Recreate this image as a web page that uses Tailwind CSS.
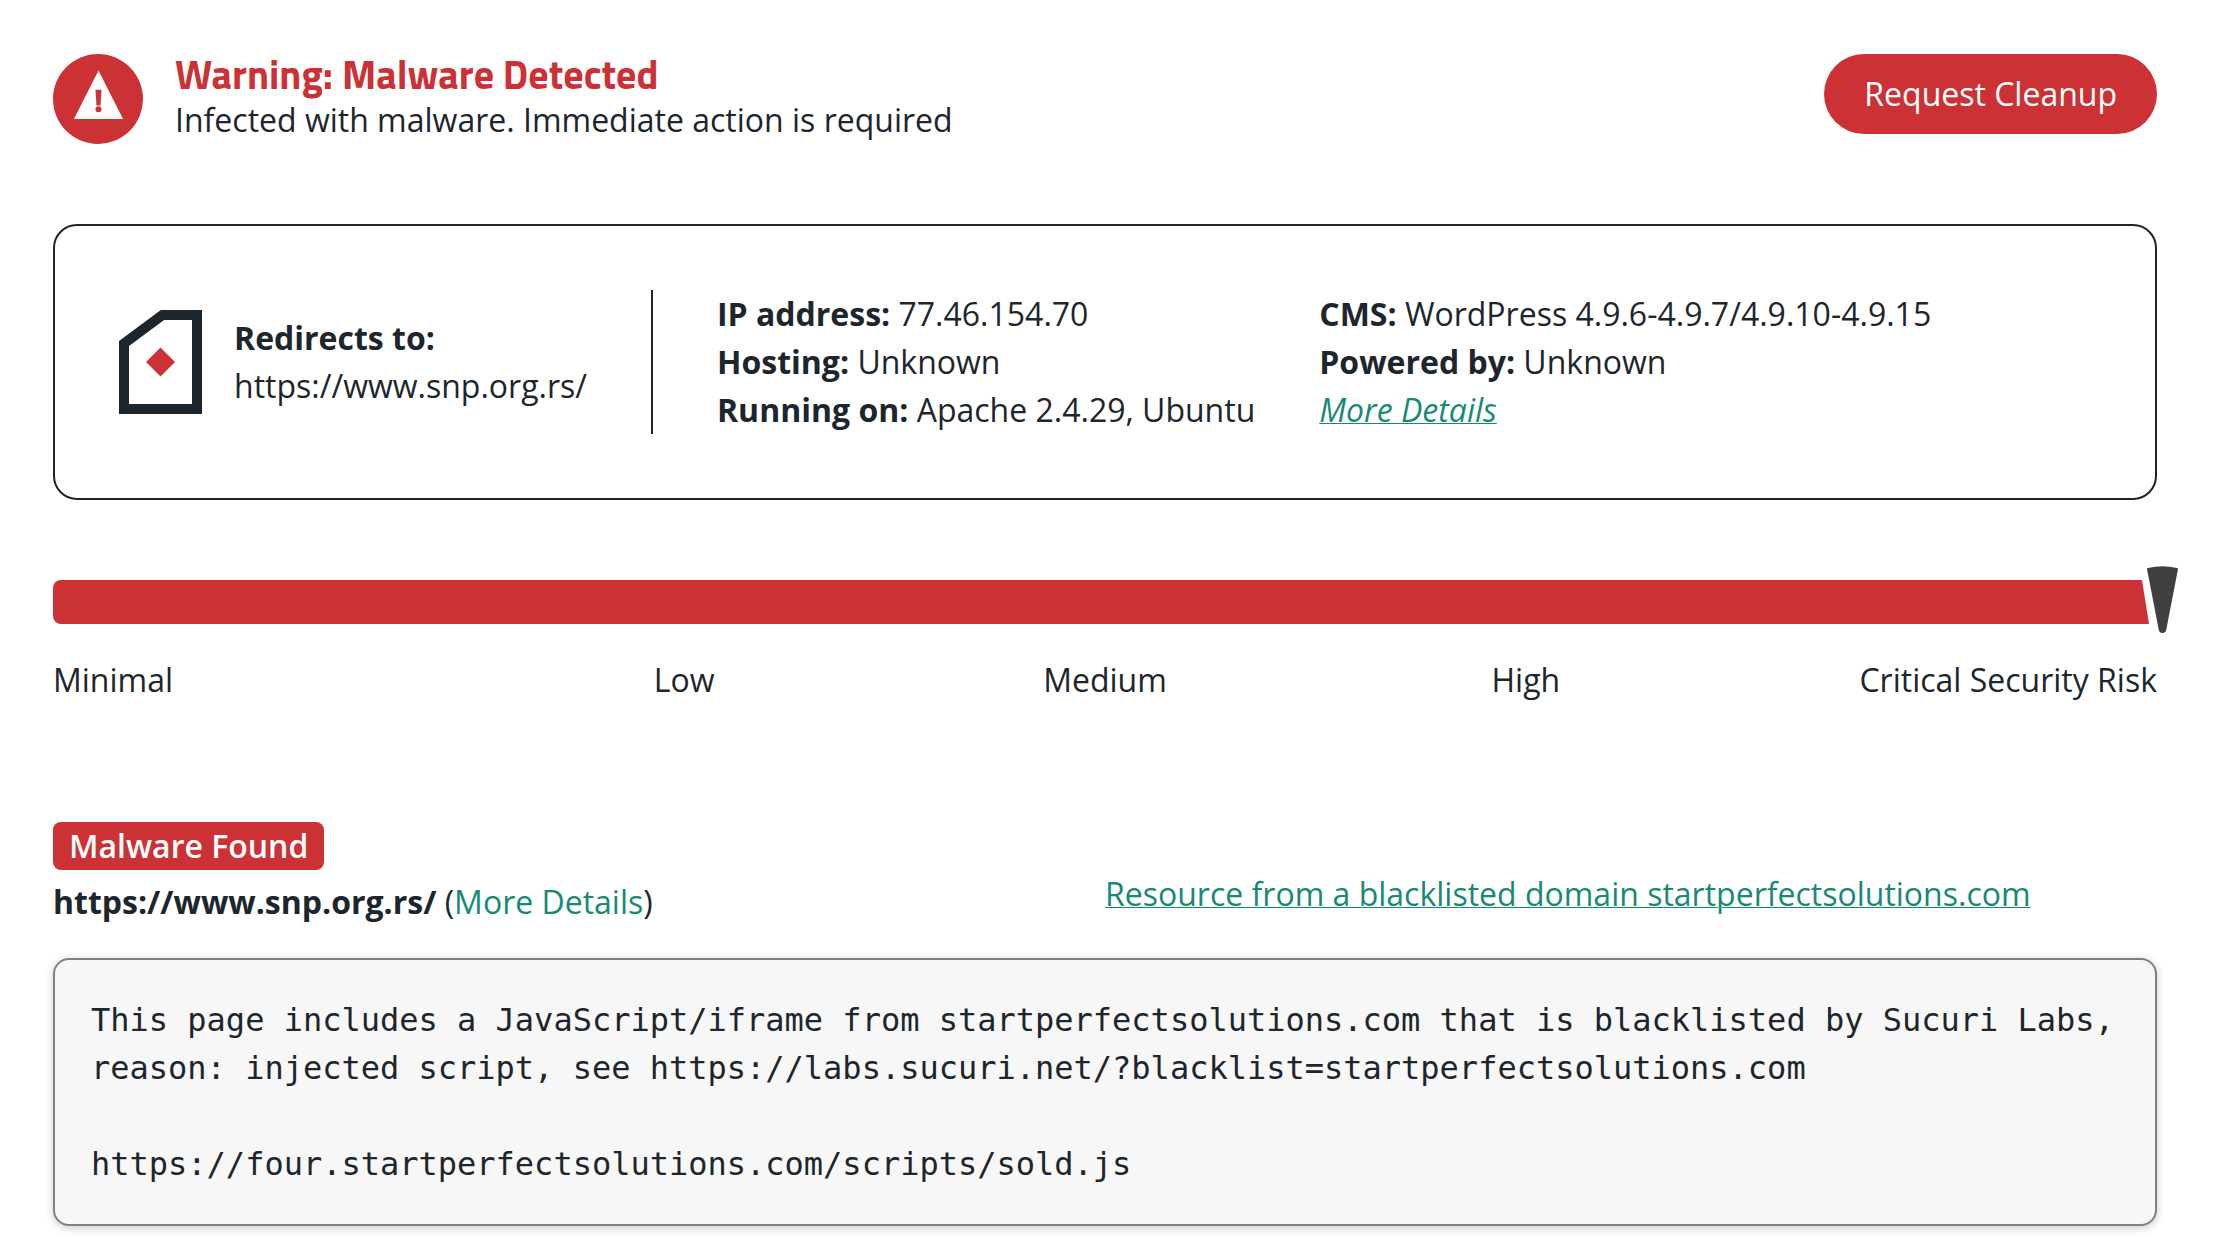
<!DOCTYPE html>
<html lang="en">
<head>
  <meta charset="UTF-8" />
  <title>Site Check Results</title>
  <meta name="viewport" content="width=device-width, initial-scale=1.0" />
  <script src="https://cdn.jsdelivr.net/npm/@tailwindcss/browser@4"></script>
</head>
<body class="bg-white text-[#1c262c] font-['Open_Sans',sans-serif] text-[32px] leading-[48px]">

  <main class="pl-[53px] pr-[61px] pt-[54px] pb-8">

    <!-- Header -->
    <header class="flex justify-between items-start">
      <div class="flex gap-8">
        <svg class="size-[90px] shrink-0" viewBox="0 0 90 90" aria-hidden="true">
          <circle cx="45" cy="45" r="45" fill="#cc3235" />
          <path d="M45.500 16.500L70 65H21z" fill="#fff" />
          <path d="M42.500 35.800h6l-1 15.800h-4z" fill="#cc3235" />
          <circle cx="45.500" cy="55.300" r="3" fill="#cc3235" />
        </svg>
        <div>
          <h1 class="text-[40px] leading-[42px] font-bold text-[#cc3235] font-['Titillium_Web','Open_Sans',sans-serif]">Warning: Malware Detected</h1>
          <p>Infected with malware. Immediate action is required</p>
        </div>
      </div>
      <button type="button" class="bg-[#cc3235] text-white rounded-full px-10 py-4 cursor-pointer">Request Cleanup</button>
    </header>

    <!-- Site info -->
    <section class="mt-20 border-2 border-[#1c262c] rounded-3xl p-16 flex">
      <div class="flex items-center gap-8 pr-16 border-r-2 border-[#1c262c]">
        <svg class="w-[83px] h-[104px] shrink-0" viewBox="0 0 83 104" aria-hidden="true">
          <path d="M5 33.500L43.500 5H78V99H5z" fill="none" stroke="#1c262c" stroke-width="10" />
          <path d="M41.500 37.500L56 52L41.500 66.500L27 52z" fill="#cc3235" />
        </svg>
        <div>
          <p class="font-bold">Redirects to:</p>
          <p>https://www.snp.org.rs/</p>
        </div>
      </div>
      <div class="pl-16">
        <p><b>IP address:</b> 77.46.154.70</p>
        <p><b>Hosting:</b> Unknown</p>
        <p><b>Running on:</b> Apache 2.4.29, Ubuntu</p>
      </div>
      <div class="pl-16">
        <p><b>CMS:</b> WordPress 4.9.6-4.9.7/4.9.10-4.9.15</p>
        <p><b>Powered by:</b> Unknown</p>
        <p><a href="#details" class="italic underline decoration-1 text-[#178a74]">More Details</a></p>
      </div>
    </section>

    <!-- Risk meter -->
    <section class="mt-20">
      <div class="relative h-11 bg-[#cc3235] rounded-l-lg">
        <svg class="absolute -right-[22px] -top-[14px] w-[38px] h-[68px]" viewBox="0 0 38 68" aria-hidden="true">
          <path d="M1 14H38V58H8z" fill="#fff" />
          <path d="M6 3Q6 2.200 7 2Q21.500 -1.600 36 2Q37 2.200 37 3L25.500 62.500Q25 67 21.500 67Q18 67 17.500 62.500z" fill="#404040" />
        </svg>
      </div>
      <div class="mt-8 grid grid-cols-5 text-center">
        <span class="text-left">Minimal</span>
        <span>Low</span>
        <span>Medium</span>
        <span>High</span>
        <span class="text-right">Critical Security Risk</span>
      </div>
    </section>

    <!-- Findings -->
    <section class="mt-[118px]" id="details">
      <div class="grid grid-cols-2">
        <div>
          <h2 class="w-fit bg-[#cc3235] text-white font-semibold rounded-lg px-4">Malware Found</h2>
          <p class="mt-2"><b>https://www.snp.org.rs/</b> (<a href="#payload" class="text-[#178a74]">More Details</a>)</p>
        </div>
        <p class="pt-12"><a href="#payload" class="underline decoration-1 text-[#178a74]">Resource from a blacklisted domain startperfectsolutions.com</a></p>
      </div>
      <pre id="payload" class="mt-8 p-9 bg-[#f7f7f7] border-2 border-[#808080] rounded-2xl shadow-[0_2px_10px_rgba(0,0,0,0.2)] font-['DejaVu_Sans_Mono',monospace] whitespace-pre-wrap">This page includes a JavaScript/iframe from startperfectsolutions.com that is blacklisted by Sucuri Labs, reason: injected script, see https://labs.sucuri.net/?blacklist=startperfectsolutions.com

https://four.startperfectsolutions.com/scripts/sold.js</pre>
    </section>

  </main>

</body>
</html>
